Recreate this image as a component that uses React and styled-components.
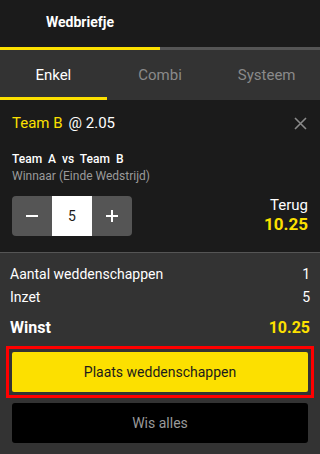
import React from "react";
import styled, { createGlobalStyle } from "styled-components";

const GlobalStyle = createGlobalStyle`
  html, body { margin: 0; padding: 0; background: #333333; }
  body { font-family: Roboto, "Liberation Sans", sans-serif; }
`;

const Slip = styled.div`
  width: 320px;
  height: 454px;
  background: #333333;
  display: flex;
  flex-direction: column;
  overflow: hidden;
`;

const Header = styled.div`
  display: flex;
  background: #1b1b1b;
`;

const HeaderTab = styled.div`
  flex: 1;
  height: 50px;
  box-sizing: border-box;
  display: flex;
  align-items: center;
  justify-content: center;
  padding-bottom: 3px;
  color: #ffffff;
  font-size: 14px;
  font-weight: 700;
  border-bottom: 3px solid ${(p) => (p.active ? "#fce000" : "#555555")};
`;

const Tabs = styled.div`
  display: flex;
  background: #333333;
`;

const Tab = styled.div`
  flex: 1;
  height: 50px;
  box-sizing: border-box;
  display: flex;
  align-items: center;
  justify-content: center;
  padding-top: 2px;
  font-size: 15px;
  color: ${(p) => (p.active ? "#ffffff" : "#8a8a8a")};
  border-bottom: 3px solid ${(p) => (p.active ? "#fce000" : "transparent")};
`;

const Card = styled.div`
  background: #1b1b1b;
  padding: 11px 12px 16px 12px;
  border-bottom: 1px solid #555555;
`;

const TitleRow = styled.div`
  display: flex;
  align-items: center;
  justify-content: space-between;
  height: 24px;
`;

const Pick = styled.div`
  font-size: 15px;
  color: #ffffff;
`;

const PickName = styled.span`
  color: #fce000;
  margin-right: 6px;
`;

const Close = styled.svg`
  width: 13px;
  height: 13px;
  margin-right: 1px;
`;

const Match = styled.div`
  margin-top: 17px;
  font-size: 12px;
  font-weight: 500;
  color: #ffffff;
  word-spacing: 3px;
`;

const Market = styled.div`
  margin-top: 3px;
  font-size: 12px;
  color: #9a9a9a;
`;

const StakeRow = styled.div`
  margin-top: 13px;
  display: flex;
  align-items: center;
  justify-content: space-between;
`;

const Stepper = styled.div`
  display: flex;
  height: 40px;
  border-radius: 4px;
  overflow: hidden;
`;

const StepButton = styled.div`
  width: 40px;
  height: 40px;
  background: #555555;
  display: flex;
  align-items: center;
  justify-content: center;
`;

const StakeInput = styled.div`
  width: 40px;
  height: 40px;
  background: #ffffff;
  color: #1b1b1b;
  font-size: 14px;
  display: flex;
  align-items: center;
  justify-content: center;
`;

const Return = styled.div`
  text-align: right;
  margin-top: -2px;
`;

const ReturnLabel = styled.div`
  font-size: 15px;
  color: #ffffff;
  line-height: 18px;
`;

const ReturnValue = styled.div`
  font-size: 17px;
  font-weight: 700;
  color: #fce000;
  line-height: 20px;
`;

const Summary = styled.div`
  padding: 9px 10px 0 10px;
  display: flex;
  flex-direction: column;
`;

const SumRow = styled.div`
  display: flex;
  justify-content: space-between;
  align-items: center;
  height: 23px;
  font-size: 14px;
  color: #ffffff;
`;

const TotalRow = styled(SumRow)`
  height: 32px;
  margin-top: 3px;
  font-size: 16px;
  font-weight: 700;
`;

const Yellow = styled.span`
  color: #fce000;
`;

const Actions = styled.div`
  padding: 3px 6px 0 6px;
  display: flex;
  flex-direction: column;
  gap: 5px;
`;

const Highlight = styled.div`
  border: 3px solid #ff0000;
  padding: 3px;
  display: flex;
  flex-direction: column;
`;

const PlaceButton = styled.button`
  height: 40px;
  border: none;
  border-radius: 2px;
  background: #fce000;
  color: #1b1b1b;
  font-family: inherit;
  font-size: 14px;
`;

const ClearButton = styled.button`
  height: 40px;
  margin: 0 6px;
  border: none;
  border-radius: 3px;
  background: #000000;
  color: #9a9a9a;
  font-family: inherit;
  font-size: 14px;
`;

export default function App() {
  return (
    <>
      <GlobalStyle />
      <Slip>
        <Header>
          <HeaderTab active>Wedbriefje</HeaderTab>
          <HeaderTab />
        </Header>
        <Tabs>
          <Tab active>Enkel</Tab>
          <Tab>Combi</Tab>
          <Tab>Systeem</Tab>
        </Tabs>
        <Card>
          <TitleRow>
            <Pick>
              <PickName>Team B</PickName>@ 2.05
            </Pick>
            <Close viewBox="0 0 13 13">
              <path d="M1 1L12 12M12 1L1 12" stroke="#8a8a8a" strokeWidth="1.6" />
            </Close>
          </TitleRow>
          <Match>Team A vs Team B</Match>
          <Market>Winnaar (Einde Wedstrijd)</Market>
          <StakeRow>
            <Stepper>
              <StepButton>
                <svg width="14" height="14" viewBox="0 0 14 14">
                  <path d="M1 7H13" stroke="#ffffff" strokeWidth="2" />
                </svg>
              </StepButton>
              <StakeInput>5</StakeInput>
              <StepButton>
                <svg width="14" height="14" viewBox="0 0 14 14">
                  <path d="M1 7H13M7 1V13" stroke="#ffffff" strokeWidth="2" />
                </svg>
              </StepButton>
            </Stepper>
            <Return>
              <ReturnLabel>Terug</ReturnLabel>
              <ReturnValue>10.25</ReturnValue>
            </Return>
          </StakeRow>
        </Card>
        <Summary>
          <SumRow>
            <span>Aantal weddenschappen</span>
            <span>1</span>
          </SumRow>
          <SumRow>
            <span>Inzet</span>
            <span>5</span>
          </SumRow>
          <TotalRow>
            <span>Winst</span>
            <Yellow>10.25</Yellow>
          </TotalRow>
        </Summary>
        <Actions>
          <Highlight>
            <PlaceButton>Plaats weddenschappen</PlaceButton>
          </Highlight>
          <ClearButton>Wis alles</ClearButton>
        </Actions>
      </Slip>
    </>
  );
}
